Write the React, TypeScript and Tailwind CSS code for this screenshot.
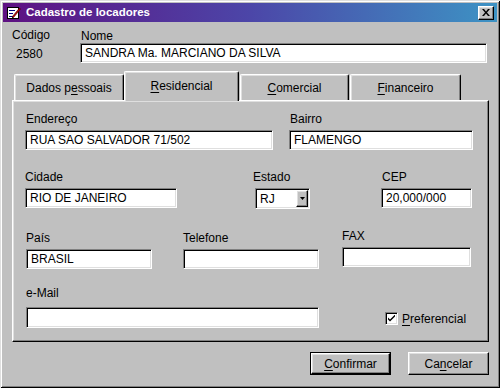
import React from "react";

const sunken =
  "bg-white border border-t-[#808080] border-l-[#808080] border-r-white border-b-white shadow-[inset_1px_1px_0_#000,inset_-1px_-1px_0_#dfdfdf] flex items-center pl-[4px] text-[12px] leading-none whitespace-nowrap overflow-hidden";
const raised =
  "border border-t-white border-l-white border-r-black border-b-black shadow-[inset_-1px_-1px_0_#808080,inset_1px_1px_0_#dfdfdf] bg-[#c0c0c0]";

function U({ children }: { children: React.ReactNode }) {
  return <span className="underline underline-offset-[2px] decoration-1">{children}</span>;
}

function Label({ children, className = "" }: { children: React.ReactNode; className?: string }) {
  return <div className={`h-[14px] leading-[14px] text-[12px] ${className}`}>{children}</div>;
}

export default function App() {
  return (
    <div className="w-[500px] h-[388px] bg-[#c0c0c0] p-[3px] flex flex-col text-black font-['Liberation_Sans',Arial,sans-serif] shadow-[inset_1px_1px_0_#dfdfdf,inset_-1px_-1px_0_#000,inset_2px_2px_0_#fff,inset_-2px_-2px_0_#808080] overflow-hidden">
      {/* Title bar */}
      <div className="h-[19px] flex items-center bg-[linear-gradient(to_right,#5e1182,#4c46a8_50%,#3d93c4)] pl-[4px] pr-[3px]">
        <svg width="14" height="14" viewBox="0 0 14 14" className="shrink-0">
          <rect x="0.5" y="1.5" width="11" height="11" fill="#fff" stroke="#000" />
          <line x1="2" y1="4.5" x2="8" y2="4.5" stroke="#000080" />
          <line x1="2" y1="7.5" x2="6" y2="7.5" stroke="#000080" />
          <line x1="2" y1="10.5" x2="6" y2="10.5" stroke="#000080" />
          <path d="M5 11 L12.5 2 L13.5 3 L6.5 11.5 Z" fill="#c00000" stroke="#400000" strokeWidth="0.6" />
          <path d="M5 11 L5.2 12.5 L6.5 11.5 Z" fill="#000" />
        </svg>
        <div className="ml-[5px] text-white font-bold text-[11.5px] leading-none flex-1">
          Cadastro de locadores
        </div>
        <div className={`${raised} w-[16px] h-[14px] flex items-center justify-center`}>
          <svg width="8" height="7" viewBox="0 0 8 7">
            <path d="M0 0 L2 0 L4 2.5 L6 0 L8 0 L5 3.5 L8 7 L6 7 L4 4.5 L2 7 L0 7 L3 3.5 Z" fill="#000" />
          </svg>
        </div>
      </div>

      {/* Header */}
      <div className="flex mt-[6px] pl-[9px]">
        <div className="w-[68px]">
          <Label>Código</Label>
          <div className="mt-[5px] pl-[4px] leading-[14px] text-[12px]">2580</div>
        </div>
        <div className="mt-[1px]">
          <Label className="pl-[1px]">Nome</Label>
          <div className={`${sunken} w-[407px] h-[20px]`}>SANDRA Ma. MARCIANO DA SILVA</div>
        </div>
      </div>

      {/* Tabs + panel */}
      <div className="mt-[8px] ml-[9px] w-[477px]">
        <div className="flex items-end pl-[2px]">
          <div className="w-[110px] h-[26px] border-t border-l border-r border-t-white border-l-white border-r-black rounded-t-[2px] shadow-[inset_-1px_0_0_#808080,inset_1px_1px_0_#dfdfdf] flex items-center justify-center text-[12px] leading-none pt-[1px]">
            Dados p<U>e</U>ssoais
          </div>
          <div className="relative z-10 -mb-[1px] w-[115px] h-[30px] bg-[#c0c0c0] border-t border-l border-r border-t-white border-l-white border-r-black rounded-t-[2px] shadow-[inset_-1px_0_0_#808080,inset_1px_1px_0_#dfdfdf] flex items-center justify-center text-[12px] leading-none pb-[1px]">
            <span>
              <U>R</U>esidencial
            </span>
          </div>
          <div className="ml-[1px] w-[109px] h-[26px] border-t border-l border-r border-t-white border-l-white border-r-black rounded-t-[2px] shadow-[inset_-1px_0_0_#808080,inset_1px_1px_0_#dfdfdf] flex items-center justify-center text-[12px] leading-none pt-[1px]">
            <span>
              <U>C</U>omercial
            </span>
          </div>
          <div className="ml-[1px] w-[111px] h-[26px] border-t border-l border-r border-t-white border-l-white border-r-black rounded-t-[2px] shadow-[inset_-1px_0_0_#808080,inset_1px_1px_0_#dfdfdf] flex items-center justify-center text-[12px] leading-none pt-[1px]">
            <span>
              <U>F</U>inanceiro
            </span>
          </div>
        </div>

        <div className="h-[242px] border border-t-white border-l-white border-r-[#000] border-b-[#000] shadow-[inset_-1px_-1px_0_#808080,inset_1px_1px_0_#dfdfdf] flex flex-col">
          {/* Row 1 */}
          <div className="flex items-start mt-[11px]">
            <div className="ml-[12px] w-[248px]">
              <Label className="pl-[1px]">Endereço</Label>
              <div className={`${sunken} mt-[4px] h-[20px] w-[248px]`}>RUA SAO SALVADOR 71/502</div>
            </div>
            <div className="ml-[16px] w-[184px]">
              <Label className="pl-[1px]">Bairro</Label>
              <div className={`${sunken} mt-[4px] h-[20px] w-[184px]`}>FLAMENGO</div>
            </div>
          </div>

          {/* Row 2 */}
          <div className="flex items-start mt-[20px]">
            <div className="ml-[12px] w-[152px]">
              <Label>Cidade</Label>
              <div className={`${sunken} mt-[4px] h-[20px] w-[152px]`}>RIO DE JANEIRO</div>
            </div>
            <div className="ml-[78px] w-[55px]">
              <Label className="-ml-[2px]">Estado</Label>
              <div className={`${sunken} mt-[4px] h-[21px] w-[55px] pl-[2px] pr-[1px] justify-between`}>
                <span>RJ</span>
                <div className={`${raised} w-[12px] h-[17px] flex items-center justify-center`}>
                  <svg width="5" height="3" viewBox="0 0 5 3">
                    <path d="M0 0 L5 0 L2.5 3 Z" fill="#000" />
                  </svg>
                </div>
              </div>
            </div>
            <div className="ml-[71px] w-[91px]">
              <Label className="pl-[1px]">CEP</Label>
              <div className={`${sunken} mt-[4px] h-[20px] w-[91px]`}>20,000/000</div>
            </div>
          </div>

          {/* Row 3 */}
          <div className="flex items-start mt-[22px]">
            <div className="ml-[13px] w-[126px]">
              <Label>País</Label>
              <div className={`${sunken} mt-[4px] h-[20px] w-[126px]`}>BRASIL</div>
            </div>
            <div className="ml-[31px] w-[136px]">
              <Label>Telefone</Label>
              <div className={`${sunken} mt-[4px] h-[20px] w-[136px]`}></div>
            </div>
            <div className="ml-[23px] w-[129px] -mt-[2px]">
              <Label>FAX</Label>
              <div className={`${sunken} mt-[4px] h-[20px] w-[129px]`}></div>
            </div>
          </div>

          {/* Row 4 */}
          <div className="flex items-start mt-[17px]">
            <div className="ml-[13px] w-[293px]">
              <Label>e-Mail</Label>
              <div className={`${sunken} mt-[7px] h-[21px] w-[293px]`}></div>
            </div>
            <div className="ml-[66px] mt-[26px] flex items-center">
              <div className="w-[13px] h-[13px] bg-white border border-t-[#808080] border-l-[#808080] border-r-white border-b-white shadow-[inset_1px_1px_0_#000,inset_-1px_-1px_0_#dfdfdf] flex items-center justify-center">
                <svg width="7" height="7" viewBox="0 0 7 7">
                  <path d="M0 2.5 L0 4.5 L2 6.5 L7 1.5 L7 -0.5 L2 4.5 Z" fill="#000" />
                </svg>
              </div>
              <div className="ml-[4px] text-[12px] leading-none">
                <U>P</U>referencial
              </div>
            </div>
          </div>
        </div>
      </div>

      {/* Buttons */}
      <div className="flex justify-end mt-[10px] pr-[8px] gap-[17px]">
        <div className="w-[81px] h-[23px] border border-black">
          <div className={`${raised} w-full h-full flex items-center justify-center text-[12px] leading-none`}>
            <span>
              <U>C</U>onfirmar
            </span>
          </div>
        </div>
        <div className={`${raised} w-[81px] h-[23px] flex items-center justify-center text-[12px] leading-none`}>
          <span>
            Ca<U>n</U>celar
          </span>
        </div>
      </div>
    </div>
  );
}
